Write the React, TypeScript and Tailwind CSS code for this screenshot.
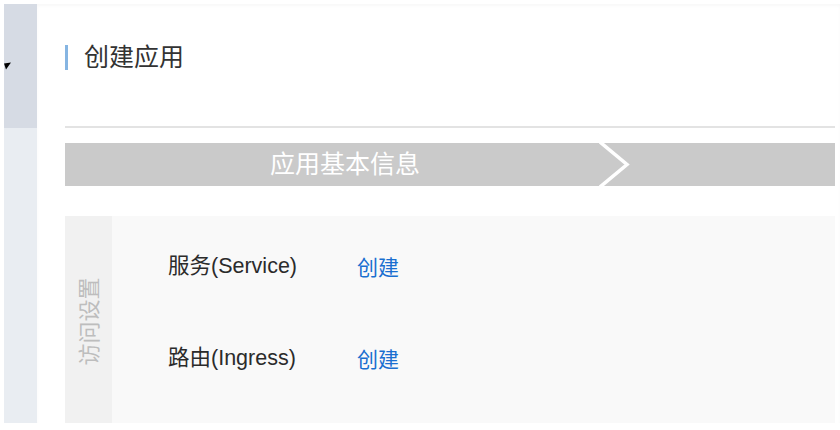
import React from 'react';

const rows = [
  { label: '服务(Service)', action: '创建' },
  { label: '路由(Ingress)', action: '创建' },
];

export default function App() {
  return (
    <div
      className="flex w-[840px] h-[430px] overflow-hidden bg-white pt-[4px] pl-[4px] pb-[7px]"
      style={{ fontFamily: '"Liberation Sans", "Noto Sans CJK SC", sans-serif' }}
    >
      {/* sidebar strip */}
      <div className="flex flex-col w-[33px] shrink-0">
        <div className="relative h-[124px] bg-[#d6dbe4]">
          <svg className="absolute left-0 top-[57px]" width="10" height="10" viewBox="0 0 10 10">
            <polygon points="0,2.5 7,1.5 2,8.5" fill="#000" />
          </svg>
        </div>
        <div className="flex-1 bg-[#e9edf2]" />
      </div>

      {/* main */}
      <div className="flex-1 flex flex-col pl-[28px] pr-[5px] shadow-[inset_0_2px_3px_rgba(0,0,0,0.03)]">
        <div className="flex items-center h-[26px] mt-[40px]">
          <div className="w-[3px] h-[25px] bg-[#86b5e2]" />
          <span className="ml-[16px] text-[25px] leading-none text-[#333]">创建应用</span>
        </div>

        <div className="mt-[56px] h-[2px] bg-[#e3e3e3]" />

        {/* steps */}
        <div className="relative flex mt-[15px] h-[43px] bg-[#cacaca]">
          <div className="w-[535px] flex items-center pl-[205px] text-[25px] text-white">
            应用基本信息
          </div>
          <svg className="absolute left-[534px] top-0" width="32" height="43" viewBox="0 0 32 43">
            <polyline points="1,-1 28,21.5 1,44" fill="none" stroke="#ffffff" strokeWidth="3.5" />
          </svg>
        </div>

        {/* access settings */}
        <div className="flex flex-1 mt-[30px] bg-[#f9f9f9]">
          <div className="w-[47px] shrink-0 bg-[#f1f1f1] flex items-center justify-center pt-[4px]">
            <span className="-rotate-90 whitespace-nowrap text-[22px] text-[#bdbdbd]">访问设置</span>
          </div>
          <div className="flex flex-col pl-[56px] pt-[37px] gap-[66px]">
            {rows.map((r) => (
              <div key={r.label} className="flex items-center h-[26px]">
                <span className="w-[189px] text-[21.5px] text-[#2b2b2b]">{r.label}</span>
                <span className="text-[21px] text-[#1a6fd0] mt-[4px]">{r.action}</span>
              </div>
            ))}
          </div>
        </div>
      </div>
    </div>
  );
}
